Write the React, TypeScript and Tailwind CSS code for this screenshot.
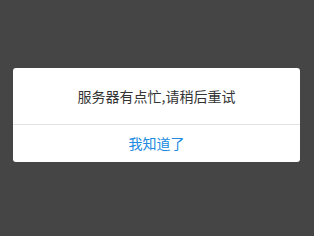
import React from "react";

export default function App() {
  return (
    <div
      className="w-[314px] h-[236px] bg-[#454545] pt-[68px] pl-[13px]"
      style={{ fontFamily: '"Noto Sans CJK SC", "Noto Sans", sans-serif' }}
    >
      <div className="w-[287px] h-[94px] bg-white rounded-[3px] flex flex-col">
        <div className="h-[56px] flex items-center justify-center pt-px text-[14px] text-[#333333]">
          服务器有点忙,请稍后重试
        </div>
        <div className="h-px bg-[#e3e3e3]" />
        <div className="flex-1 flex items-center justify-center text-[14px] text-[#2089e0]">
          我知道了
        </div>
      </div>
    </div>
  );
}
